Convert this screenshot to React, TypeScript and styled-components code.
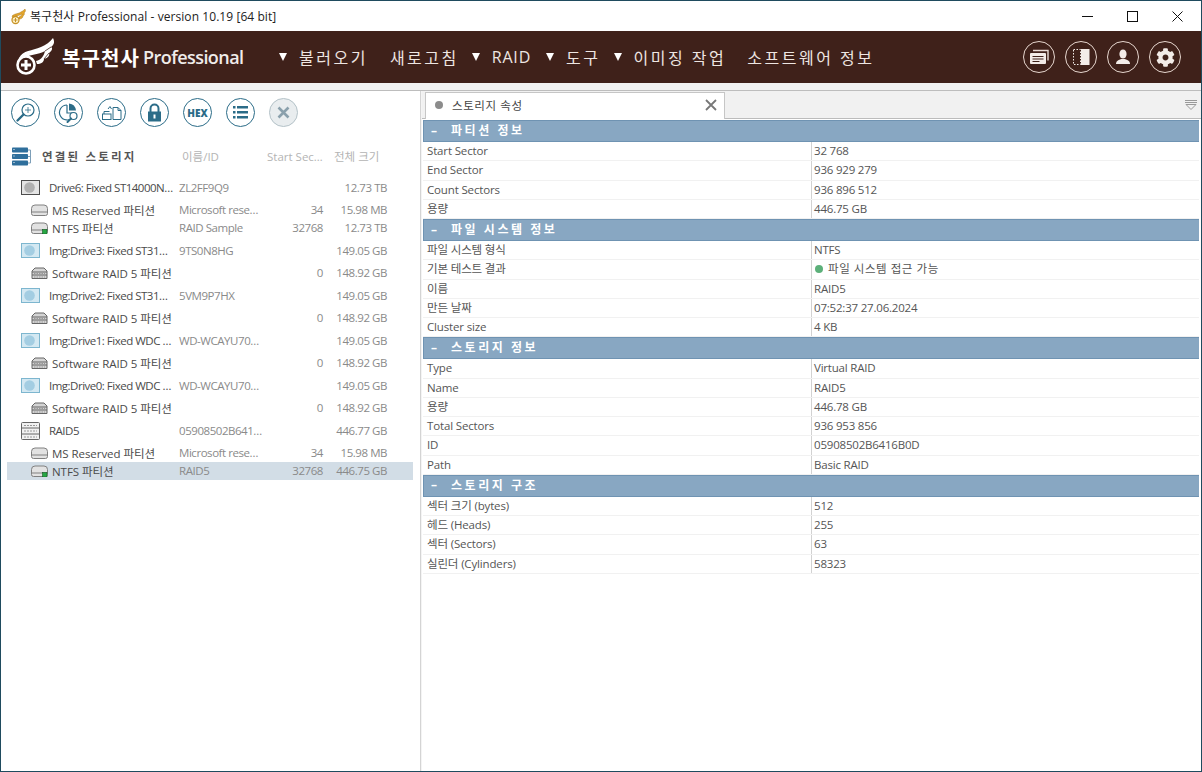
import React from "react";
import styled, { createGlobalStyle } from "styled-components";
import { FaCog } from "react-icons/fa";

const FONT = `"Open Sans", "Noto Sans CJK KR", sans-serif`;
const TEAL = "#2b6c88";

const GlobalStyle = createGlobalStyle`
    html, body {
        margin: 0;
        padding: 0;
        background: #fff;
    }
    * {
        box-sizing: border-box;
    }
`;

const Window = styled.div`
    width: 1202px;
    height: 772px;
    display: flex;
    flex-direction: column;
    border: 1px solid #1f4b5e;
    background: #fff;
    font-family: ${FONT};
    font-size: 11.5px;
    overflow: hidden;
`;

const TitleBar = styled.div`
    height: 30px;
    flex: none;
    display: flex;
    align-items: center;
    padding: 0 1px 0 9px;
    color: #222;
    font-size: 12px;
`;

const TitleText = styled.span`
    margin-left: 3px;
    flex: 1;
    letter-spacing: 0.07px;
`;

const WinButton = styled.div`
    width: 45px;
    height: 30px;
    display: flex;
    align-items: center;
    justify-content: center;
`;

const Header = styled.div`
    height: 52px;
    flex: none;
    background: #3f211a;
    display: flex;
    align-items: center;
    color: #fff;
    padding-left: 13px;
`;

const Brand = styled.div`
    display: flex;
    align-items: center;
    width: 265px;
    flex: none;
`;

const BrandName = styled.span`
    margin-left: 6px;
    font-size: 20px;
    font-weight: 700;
    letter-spacing: 1.1px;
`;

const BrandEdition = styled.span`
    margin-left: 3px;
    font-size: 18px;
    font-weight: 600;
    letter-spacing: -0.55px;
    color: #f0ecea;
`;

const Nav = styled.nav`
    display: flex;
    align-items: center;
    flex: 1;
`;

const NavItem = styled.div<{ $gap: number; $latin?: boolean }>`
    display: flex;
    align-items: center;
    margin-right: ${(p) => p.$gap}px;
    font-size: 16px;
    letter-spacing: ${(p) => (p.$latin ? 0.8 : 2.5)}px;
    color: #eee6e2;
    white-space: nowrap;
`;

const NavCaret = styled.span`
    width: 0;
    height: 0;
    margin-right: 12px;
    border-left: 4px solid transparent;
    border-right: 4px solid transparent;
    border-top: 8px solid #fff;
`;

const HeaderTools = styled.div`
    display: flex;
    gap: 10px;
    padding-right: 20px;
`;

const HeaderTool = styled.div`
    width: 32px;
    height: 32px;
    border: 1.5px solid #e6d6ce;
    border-radius: 50%;
    display: flex;
    align-items: center;
    justify-content: center;
    color: #f3ece8;
`;

const TopBand = styled.div`
    height: 8px;
    flex: none;
    background: #f1f1f1;
    border-bottom: 1px solid #bdbdbd;
`;

const Body = styled.div`
    flex: 1;
    display: flex;
    min-height: 0;
`;

const LeftPane = styled.div`
    width: 420px;
    flex: none;
    border-right: 1px solid #d4d4d4;
    padding-left: 6px;
`;

const Toolbar = styled.div`
    height: 43px;
    display: flex;
    align-items: center;
    gap: 14px;
    padding-left: 4px;
`;

const ToolButton = styled.div<{ $off?: boolean }>`
    width: 29px;
    height: 29px;
    border-radius: 50%;
    border: 1.5px solid ${(p) => (p.$off ? "#b4c2c8" : TEAL)};
    background: ${(p) => (p.$off ? "#e9edef" : "#fff")};
    display: flex;
    align-items: center;
    justify-content: center;
`;

const HexLabel = styled.span`
    font-size: 10px;
    font-weight: 800;
    color: ${TEAL};
`;

const TreeHead = styled.div`
    height: 30px;
    margin-top: 7px;
    display: flex;
    align-items: center;
    padding-left: 5px;
    color: #b4b4b4;
    white-space: nowrap;
`;

const TreeTitle = styled.span`
    width: 140px;
    margin-left: 11px;
    color: #555;
    font-weight: 700;
    letter-spacing: 2.2px;
`;

const HeadCol = styled.span<{ $w: number }>`
    width: ${(p) => p.$w}px;
    flex: none;
`;

const Tree = styled.div`
    width: 406px;
    margin-top: 3px;
`;

const TreeRow = styled.div<{ $kind: "drive" | "part"; $selected?: boolean }>`
    height: ${(p) => (p.$kind === "drive" ? 27 : 18)}px;
    padding-bottom: ${(p) => (p.$kind === "drive" ? 0 : 1)}px;
    display: grid;
    grid-template-columns: 172px 90px 54px 64px;
    align-items: center;
    background: ${(p) => (p.$selected ? "#d2dde6" : "transparent")};
    color: #8a8a8a;
    white-space: nowrap;
`;

const NameCell = styled.div<{ $kind: "drive" | "part" }>`
    display: flex;
    align-items: center;
    color: #4a4a4a;
    padding-left: ${(p) => (p.$kind === "drive" ? 14 : 24)}px;
    gap: ${(p) => (p.$kind === "drive" ? 9 : 4)}px;
    letter-spacing: ${(p) => (p.$kind === "drive" ? -0.5 : -0.05)}px;

    svg {
        flex: none;
    }
`;

const IdCell = styled.div`
    letter-spacing: -0.45px;
`;

const NumCell = styled.div`
    text-align: right;
    letter-spacing: -0.45px;
`;

const Splitter = styled.div`
    width: 1px;
    flex: none;
    background: #f4f4f4;
`;

const RightPane = styled.div`
    flex: 1;
    min-width: 0;
    display: flex;
    flex-direction: column;
`;

const TabStrip = styled.div`
    height: 28px;
    flex: none;
    display: flex;
    align-items: flex-end;
    justify-content: space-between;
    background: #f1f1f1;
    border-bottom: 1px solid #bcbcbc;
    padding-left: 3px;
`;

const Tab = styled.div`
    width: 300px;
    height: 27px;
    margin-bottom: -1px;
    background: #fff;
    border: 1px solid #c6c6c6;
    border-bottom: none;
    display: flex;
    align-items: center;
    padding: 0 7px 3px 9px;
    color: #444;
`;

const TabDot = styled.span`
    width: 8px;
    height: 8px;
    border-radius: 50%;
    background: #8c8c8c;
    margin-right: 9px;
`;

const TabLabel = styled.span`
    flex: 1;
    letter-spacing: 0.6px;
`;

const StripMenu = styled.div`
    align-self: center;
    margin-right: 4px;
    display: flex;
`;

const Props = styled.div`
    padding: 1px 2px 0 1px;
`;

const SectionHead = styled.div`
    height: 22px;
    display: flex;
    align-items: center;
    padding-bottom: 2px;
    background: #88a7c2;
    border-top: 1px solid #6f93b2;
    border-bottom: 1px solid #6f93b2;
    border-left: 1px solid #6f93b2;
    color: #fff;
    font-size: 12px;
    font-weight: 700;
    letter-spacing: 2.55px;
`;

const SectionMark = styled.span`
    width: 20px;
    margin-right: 7px;
    text-align: center;
    letter-spacing: 0;
`;

const PropRow = styled.div`
    height: 19.25px;
    display: grid;
    grid-template-columns: 389px 1fr;
    align-items: stretch;
    color: #555;
    border-bottom: 1px solid #f1f1f1;
    line-height: 18px;
    letter-spacing: -0.15px;
`;

const PropKey = styled.div`
    padding-left: 4px;
    border-right: 1px solid #d2d2d2;
`;

const PropValue = styled.div<{ $ok?: boolean }>`
    padding-left: 2px;
    display: flex;
    align-items: center;
    letter-spacing: ${(p) => (p.$ok ? 0.55 : -0.2)}px;
`;

const StatusDot = styled.span`
    width: 8px;
    height: 8px;
    border-radius: 50%;
    background: #5cb07a;
    margin: 0 5px 0 1px;
`;

const WingLogo = () => (
    <svg width="42" height="42" viewBox="0 0 42 42" fill="none">
        <path
            d="M5 22C9 14 18 15 27 11C32 9 36 6 39 2C41 6 40 9 37 11C39 12 38 15 35 17C36 19 34 22 30 23C30 26 27 28 23 28L22 25C27 24 30 20 31 15C25 19 14 18 7 24Z"
            fill="#fff"
        />
        <path d="M31 15L37 11M30 23L35 17" stroke="#3f211a" strokeWidth="0.8" />
        <circle cx="12" cy="29" r="8.5" stroke="#fff" strokeWidth="2.6" fill="#3f211a" />
        <path d="M12 24v10M7 29h10" stroke="#fff" strokeWidth="3" />
    </svg>
);

const TitleWing = () => (
    <svg width="17" height="17" viewBox="0 0 17 17" fill="none">
        <path d="M2 8C5 5 9 6 11 4C13 3 14 2 15 1C16 3 15 4 14 5C15 6 14 7 13 8C13 10 11 11 9 11L9 9C11 8 12 7 12 6C9 8 6 7 3 10Z" fill="#e3a52c" stroke="#a9781a" strokeWidth="0.5" />
        <circle cx="5.5" cy="12" r="3.5" stroke="#c79226" strokeWidth="1.3" fill="#fff3c9" />
        <path d="M5.5 10v4M3.5 12h4" stroke="#c79226" strokeWidth="1" />
    </svg>
);

const MinimizeIcon = () => (
    <svg width="11" height="11" viewBox="0 0 11 11">
        <path d="M0 5.5h11" stroke="#111" strokeWidth="1" />
    </svg>
);

const MaximizeIcon = () => (
    <svg width="11" height="11" viewBox="0 0 11 11" fill="none">
        <rect x="0.5" y="0.5" width="10" height="10" stroke="#111" strokeWidth="1" />
    </svg>
);

const CloseIcon = () => (
    <svg width="11" height="11" viewBox="0 0 11 11">
        <path d="M0.5 0.5l10 10M10.5 0.5l-10 10" stroke="#111" strokeWidth="1" />
    </svg>
);

const CardsIcon = () => (
    <svg width="20" height="16" viewBox="0 0 20 16">
        <path d="M4 1.5h15v10" fill="none" stroke="#e9dcd6" strokeWidth="1.4" />
        <rect x="1" y="4" width="16" height="11" rx="1" fill="#f3ece8" />
        <path d="M3.5 7.5h11M3.5 10h11M3.5 12.5h7" stroke="#3f211a" strokeWidth="1.2" />
    </svg>
);

const PanelIcon = () => (
    <svg width="17" height="18" viewBox="0 0 17 18">
        <rect x="0.5" y="1.5" width="7" height="15" fill="none" stroke="#f3ece8" strokeDasharray="1.5 1.5" />
        <rect x="8" y="1" width="8.5" height="16" fill="#f3ece8" />
    </svg>
);

const UserIcon = () => (
    <svg width="16" height="16" viewBox="0 0 16 16" fill="#f3ece8">
        <ellipse cx="8" cy="5" rx="3.6" ry="4.6" />
        <path d="M1 15c0-3 2.5-4 5-5h4c2.500 1 5 2 5 5z" />
    </svg>
);

const SearchIcon = () => (
    <svg width="21" height="21" viewBox="0 0 21 21" fill="none" stroke={TEAL}>
        <circle cx="13" cy="8" r="6" strokeWidth="1.2" />
        <path d="M13 5v6M10 8h6" strokeWidth="0.8" />
        <path d="M8.500 12.500L2.500 18.500" strokeWidth="2.4" strokeLinecap="round" />
    </svg>
);

const PieSearchIcon = () => (
    <svg width="22" height="22" viewBox="0 0 22 22" fill="none" stroke={TEAL}>
        <path d="M9 3a7.500 7.500 0 1 0 6 12" strokeWidth="1.2" />
        <path d="M9 3v8h6" strokeWidth="1.2" />
        <path d="M11 1.500a8 8 0 0 1 7 7h-7z" fill={TEAL} stroke="none" />
        <circle cx="15.500" cy="14" r="3.500" strokeWidth="1.200" fill="#fff" />
        <path d="M13 16.500l-3.500 3.500" strokeWidth="2" strokeLinecap="round" />
    </svg>
);

const FilesIcon = () => (
    <svg width="22" height="18" viewBox="0 0 22 18" fill="none" stroke={TEAL} strokeWidth="1">
        <path d="M12 3.500h5l3 3v9h-8z" />
        <path d="M17 3.500v3h3" />
        <rect x="1.500" y="10" width="8.500" height="5.500" />
        <path d="M3 10V7.500h5.500" />
        <path d="M7 5l2-2.500 1.500 2.500" />
    </svg>
);

const LockIcon = () => (
    <svg width="15" height="19" viewBox="0 0 15 19" fill="none">
        <path d="M3.500 9V5.500a4 4 0 0 1 8 0V9" stroke={TEAL} strokeWidth="2" />
        <path d="M1 8.500h13v10H1z" fill={TEAL} />
        <rect x="6.500" y="11.500" width="2" height="4" fill="#fff" />
    </svg>
);

const ListIcon = () => (
    <svg width="15" height="13" viewBox="0 0 15 13" fill={TEAL}>
        <path d="M0 0h2.500v2.500H0zM4 0h11v2.500H4zM0 5h2.500v2.500H0zM4 5h11v2.500H4zM0 10h2.500v2.500H0zM4 10h11v2.500H4z" />
    </svg>
);

const CrossIcon = () => (
    <svg width="13" height="13" viewBox="0 0 13 13">
        <path d="M1.500 1.500l10 10M11.500 1.500l-10 10" stroke="#8aa0ac" strokeWidth="2.600" />
    </svg>
);

const StorageIcon = () => (
    <svg width="19" height="19" viewBox="0 0 19 19">
        <rect x="0" y="0.500" width="16" height="5" rx="0.800" fill="#2f6f9c" />
        <rect x="0" y="7" width="16" height="5" rx="0.800" fill="#2f6f9c" />
        <rect x="0" y="13.500" width="16" height="5" rx="0.800" fill="#2f6f9c" />
        <path d="M16 3h2.500v13H16M18.500 9.500H16" stroke="#7d9fb8" fill="none" />
        <path d="M1.500 2.500h1M1.500 9h1M1.500 15.500h1" stroke="#fff" />
    </svg>
);

const DriveIcon = ({ image }: { image?: boolean }) => (
    <svg width="19" height="15" viewBox="0 0 19 15">
        <rect
            x="0.500"
            y="0.500"
            width="18"
            height="14"
            fill={image ? "#d3e8f2" : "#e4e4e4"}
            stroke={image ? "#7db6cf" : "#4d4d4d"}
        />
        <circle cx="8.500" cy="7.500" r="5.300" fill={image ? "#a3cde2" : "#b0b0b0"} />
    </svg>
);

const PartIcon = ({ ok }: { ok?: boolean }) => (
    <svg width="17" height="12" viewBox="0 0 17 12">
        <path d="M0.500 9.500V4.500Q0.500 1 4 1H13Q16.500 1 16.500 4.500V9.500Q16.500 11.500 14.500 11.500H2.500Q0.500 11.500 0.500 9.500z" fill="#e2e2e2" stroke="#808080" />
        <path d="M1 8h15" stroke="#808080" />
        {ok && <rect x="11.500" y="7.500" width="4.500" height="4.500" fill="#27a744" stroke="#145a24" strokeWidth="0.600" />}
    </svg>
);

const SoftRaidIcon = () => (
    <svg width="17" height="12" viewBox="0 0 17 12">
        <path d="M1 4L4 1h9l3 3v7.500H1z" fill="#d4d4d4" stroke="#666" />
        <path d="M1 5h15M1 8h15" stroke="#666" />
        <path d="M3 6.500h11M3 10h11" stroke="#999" strokeDasharray="1.500 1" />
    </svg>
);

const RaidIcon = () => (
    <svg width="19" height="18" viewBox="0 0 19 18">
        <rect x="0.500" y="0.500" width="18" height="17" rx="1" fill="#f1f1f1" stroke="#666" />
        <path d="M1 6h17M1 12h17" stroke="#666" />
        <path d="M3 3.500h13M3 9h13M3 15h13" stroke="#999" strokeDasharray="2 1" />
    </svg>
);

const StripMenuIcon = () => (
    <svg width="12" height="10" viewBox="0 0 12 10" fill="none" stroke="#9a9a9a">
        <path d="M0 0.500h12M0 2.500h12" />
        <path d="M1 4.500h10L6 9.500z" />
    </svg>
);

type TreeItem = {
    icon: React.ReactNode;
    kind: "drive" | "part";
    name: string;
    id?: string;
    start?: string;
    size: string;
    selected?: boolean;
};

const softRaid = (): TreeItem => ({
    icon: <SoftRaidIcon />,
    kind: "part",
    name: "Software RAID 5 파티션",
    start: "0",
    size: "148.92 GB",
});

const treeItems: TreeItem[] = [
    { icon: <DriveIcon />, kind: "drive", name: "Drive6: Fixed ST14000N…", id: "ZL2FF9Q9", size: "12.73 TB" },
    { icon: <PartIcon />, kind: "part", name: "MS Reserved 파티션", id: "Microsoft rese…", start: "34", size: "15.98 MB" },
    { icon: <PartIcon ok />, kind: "part", name: "NTFS 파티션", id: "RAID Sample", start: "32768", size: "12.73 TB" },
    { icon: <DriveIcon image />, kind: "drive", name: "Img:Drive3: Fixed ST31…", id: "9TS0N8HG", size: "149.05 GB" },
    softRaid(),
    { icon: <DriveIcon image />, kind: "drive", name: "Img:Drive2: Fixed ST31…", id: "5VM9P7HX", size: "149.05 GB" },
    softRaid(),
    { icon: <DriveIcon image />, kind: "drive", name: "Img:Drive1: Fixed WDC …", id: "WD-WCAYU70…", size: "149.05 GB" },
    softRaid(),
    { icon: <DriveIcon image />, kind: "drive", name: "Img:Drive0: Fixed WDC …", id: "WD-WCAYU70…", size: "149.05 GB" },
    softRaid(),
    { icon: <RaidIcon />, kind: "drive", name: "RAID5", id: "05908502B641…", size: "446.77 GB" },
    { icon: <PartIcon />, kind: "part", name: "MS Reserved 파티션", id: "Microsoft rese…", start: "34", size: "15.98 MB" },
    { icon: <PartIcon ok />, kind: "part", name: "NTFS 파티션", id: "RAID5", start: "32768", size: "446.75 GB", selected: true },
];

type PropSection = {
    title: string;
    rows: { key: string; value: string; ok?: boolean }[];
};

const sections: PropSection[] = [
    {
        title: "파티션 정보",
        rows: [
            { key: "Start Sector", value: "32 768" },
            { key: "End Sector", value: "936 929 279" },
            { key: "Count Sectors", value: "936 896 512" },
            { key: "용량", value: "446.75 GB" },
        ],
    },
    {
        title: "파일 시스템 정보",
        rows: [
            { key: "파일 시스템 형식", value: "NTFS" },
            { key: "기본 테스트 결과", value: "파일 시스템 접근 가능", ok: true },
            { key: "이름", value: "RAID5" },
            { key: "만든 날짜", value: "07:52:37 27.06.2024" },
            { key: "Cluster size", value: "4 KB" },
        ],
    },
    {
        title: "스토리지 정보",
        rows: [
            { key: "Type", value: "Virtual RAID" },
            { key: "Name", value: "RAID5" },
            { key: "용량", value: "446.78 GB" },
            { key: "Total Sectors", value: "936 953 856" },
            { key: "ID", value: "05908502B6416B0D" },
            { key: "Path", value: "Basic RAID" },
        ],
    },
    {
        title: "스토리지 구조",
        rows: [
            { key: "섹터 크기 (bytes)", value: "512" },
            { key: "헤드 (Heads)", value: "255" },
            { key: "섹터 (Sectors)", value: "63" },
            { key: "실린더 (Cylinders)", value: "58323" },
        ],
    },
];

const navItems = [
    { label: "불러오기", caret: true, gap: 22 },
    { label: "새로고침", caret: false, gap: 13 },
    { label: "RAID", caret: true, gap: 15, latin: true },
    { label: "도구", caret: true, gap: 13 },
    { label: "이미징 작업", caret: true, gap: 21 },
    { label: "소프트웨어 정보", caret: false, gap: 0 },
];

const App: React.FC = () => {
    return (
        <Window>
            <GlobalStyle />
            <TitleBar>
                <TitleWing />
                <TitleText>복구천사 Professional - version 10.19 [64 bit]</TitleText>
                <WinButton>
                    <MinimizeIcon />
                </WinButton>
                <WinButton>
                    <MaximizeIcon />
                </WinButton>
                <WinButton>
                    <CloseIcon />
                </WinButton>
            </TitleBar>
            <Header>
                <Brand>
                    <WingLogo />
                    <BrandName>복구천사</BrandName>
                    <BrandEdition>Professional</BrandEdition>
                </Brand>
                <Nav>
                    {navItems.map((item) => (
                        <NavItem key={item.label} $gap={item.gap} $latin={item.latin}>
                            {item.caret && <NavCaret />}
                            {item.label}
                        </NavItem>
                    ))}
                </Nav>
                <HeaderTools>
                    <HeaderTool>
                        <CardsIcon />
                    </HeaderTool>
                    <HeaderTool>
                        <PanelIcon />
                    </HeaderTool>
                    <HeaderTool>
                        <UserIcon />
                    </HeaderTool>
                    <HeaderTool>
                        <FaCog size={19} />
                    </HeaderTool>
                </HeaderTools>
            </Header>
            <TopBand />
            <Body>
                <LeftPane>
                    <Toolbar>
                        <ToolButton>
                            <SearchIcon />
                        </ToolButton>
                        <ToolButton>
                            <PieSearchIcon />
                        </ToolButton>
                        <ToolButton>
                            <FilesIcon />
                        </ToolButton>
                        <ToolButton>
                            <LockIcon />
                        </ToolButton>
                        <ToolButton>
                            <HexLabel>HEX</HexLabel>
                        </ToolButton>
                        <ToolButton>
                            <ListIcon />
                        </ToolButton>
                        <ToolButton $off>
                            <CrossIcon />
                        </ToolButton>
                    </Toolbar>
                    <TreeHead>
                        <StorageIcon />
                        <TreeTitle>연결된 스토리지</TreeTitle>
                        <HeadCol $w={85}>이름/ID</HeadCol>
                        <HeadCol $w={67}>Start Sec…</HeadCol>
                        <HeadCol $w={50}>전체 크기</HeadCol>
                    </TreeHead>
                    <Tree>
                        {treeItems.map((item, i) => (
                            <TreeRow key={i} $kind={item.kind} $selected={item.selected}>
                                <NameCell $kind={item.kind}>
                                    {item.icon}
                                    {item.name}
                                </NameCell>
                                <IdCell>{item.id}</IdCell>
                                <NumCell>{item.start}</NumCell>
                                <NumCell>{item.size}</NumCell>
                            </TreeRow>
                        ))}
                    </Tree>
                </LeftPane>
                <Splitter />
                <RightPane>
                    <TabStrip>
                        <Tab>
                            <TabDot />
                            <TabLabel>스토리지 속성</TabLabel>
                            <svg width="12" height="12" viewBox="0 0 12 12">
                                <path d="M1 1l10 10M11 1L1 11" stroke="#777" strokeWidth="1.800" />
                            </svg>
                        </Tab>
                        <StripMenu>
                            <StripMenuIcon />
                        </StripMenu>
                    </TabStrip>
                    <Props>
                        {sections.map((section) => (
                            <div key={section.title}>
                                <SectionHead>
                                    <SectionMark>–</SectionMark>
                                    {section.title}
                                </SectionHead>
                                {section.rows.map((row) => (
                                    <PropRow key={row.key}>
                                        <PropKey>{row.key}</PropKey>
                                        <PropValue $ok={row.ok}>
                                            {row.ok && <StatusDot />}
                                            {row.value}
                                        </PropValue>
                                    </PropRow>
                                ))}
                            </div>
                        ))}
                    </Props>
                </RightPane>
            </Body>
        </Window>
    );
};

export default App;
